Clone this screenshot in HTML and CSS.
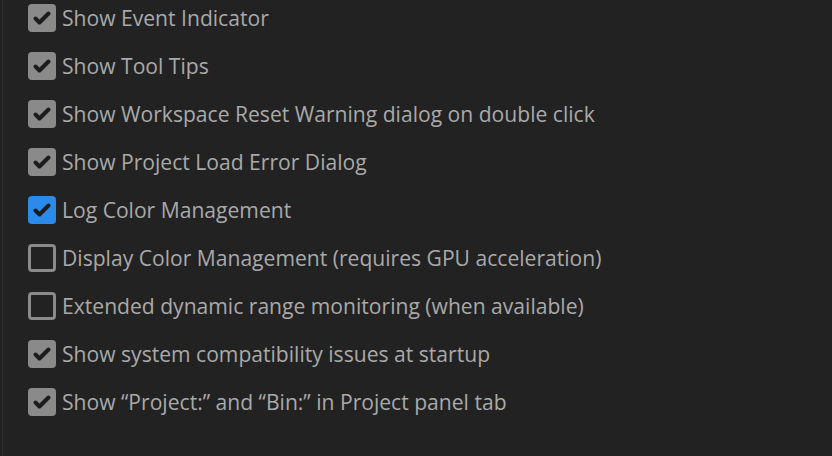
FILE: index.html
```html
<!DOCTYPE html>
<html>
<head>
<meta charset="utf-8">
<link rel="stylesheet" href="styles.css">
</head>
<body>
<div class="panel">
  <ul class="options">
    <li class="option"><span class="box checked"><svg viewBox="0 0 28 28"><path d="M7.5 14.5 L11.5 18.5 L20.5 9.5"/></svg></span><span class="label">Show Event Indicator</span></li>
    <li class="option"><span class="box checked"><svg viewBox="0 0 28 28"><path d="M7.5 14.5 L11.5 18.5 L20.5 9.5"/></svg></span><span class="label">Show Tool Tips</span></li>
    <li class="option"><span class="box checked"><svg viewBox="0 0 28 28"><path d="M7.5 14.5 L11.5 18.5 L20.5 9.5"/></svg></span><span class="label">Show Workspace Reset Warning dialog on double click</span></li>
    <li class="option"><span class="box checked"><svg viewBox="0 0 28 28"><path d="M7.5 14.5 L11.5 18.5 L20.5 9.5"/></svg></span><span class="label">Show Project Load Error Dialog</span></li>
    <li class="option"><span class="box checked blue"><svg viewBox="0 0 28 28"><path d="M7.5 14.5 L11.5 18.5 L20.5 9.5"/></svg></span><span class="label">Log Color Management</span></li>
    <li class="option"><span class="box"></span><span class="label">Display Color Management (requires GPU acceleration)</span></li>
    <li class="option"><span class="box"></span><span class="label">Extended dynamic range monitoring (when available)</span></li>
    <li class="option"><span class="box checked"><svg viewBox="0 0 28 28"><path d="M7.5 14.5 L11.5 18.5 L20.5 9.5"/></svg></span><span class="label">Show system compatibility issues at startup</span></li>
    <li class="option"><span class="box checked"><svg viewBox="0 0 28 28"><path d="M7.5 14.5 L11.5 18.5 L20.5 9.5"/></svg></span><span class="label">Show “Project:” and “Bin:” in Project panel tab</span></li>
  </ul>
</div>
</body>
</html>
```
FILE: styles.css
```css
html, body {
  margin: 0;
  padding: 0;
  background: #222222;
  height: 100%;
}
body {
  font-family: "Open Sans", "Liberation Sans", sans-serif;
}
.panel {
  margin-left: 2px;
  border-left: 1px solid #2e2e2e;
  height: 456px;
  box-sizing: border-box;
  padding: 4px 0 0 25px;
}
.options {
  list-style: none;
  margin: 0;
  padding: 0;
  display: flex;
  flex-direction: column;
  gap: 20px;
}
.option {
  display: flex;
  align-items: center;
  height: 28px;
  gap: 6px;
}
.box {
  width: 28px;
  height: 28px;
  box-sizing: border-box;
  border: 3px solid #8a8a8a;
  border-radius: 4px;
  background: #222222;
  flex: none;
  display: flex;
}
.box.checked {
  background: #8a8a8a;
  border: none;
}
.box.blue {
  background: #2b8bea;
}
.box svg {
  width: 28px;
  height: 28px;
}
.box svg path {
  fill: none;
  stroke: #1c1c1c;
  stroke-width: 4;
  stroke-linecap: round;
  stroke-linejoin: round;
}
.label {
  color: #a9a9a9;
  font-size: 21.1px;
  line-height: 28px;
  white-space: nowrap;
}
```
